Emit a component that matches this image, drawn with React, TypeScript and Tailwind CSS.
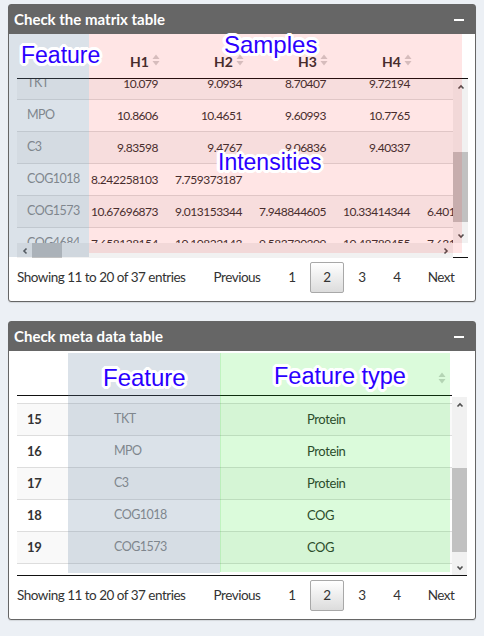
import React from "react";

const halo =
  "[text-shadow:0_0_3px_#fff,3px_0_0_#fff,-3px_0_0_#fff,0_3px_0_#fff,0_-3px_0_#fff,2px_2px_0_#fff,-2px_-2px_0_#fff,2px_-2px_0_#fff,-2px_2px_0_#fff,3px_1px_0_#fff,-3px_1px_0_#fff,3px_-1px_0_#fff,-3px_-1px_0_#fff,1px_3px_0_#fff,-1px_3px_0_#fff,1px_-3px_0_#fff,-1px_-3px_0_#fff]";

const matrixRows = [
  ["TKT", "10.079", "9.0934", "8.70407", "9.72194", ""],
  ["MPO", "10.8606", "10.4651", "9.60993", "10.7765", ""],
  ["C3", "9.83598", "9.4767", "9.06836", "9.40337", ""],
  ["COG1018", "8.242258103", "7.759373187", "", "", ""],
  ["COG1573", "10.67696873", "9.013153344", "7.948844605", "10.33414344", "6.401528874"],
  ["COG4684", "7.658128154", "10.10822143", "9.583720309", "10.48789455", "7.631894512"],
];

const metaRows = [
  ["14", "", ""],
  ["15", "TKT", "Protein"],
  ["16", "MPO", "Protein"],
  ["17", "C3", "Protein"],
  ["18", "COG1018", "COG"],
  ["19", "COG1573", "COG"],
  ["", "", ""],
];

function SortIcon() {
  return (
    <svg width="8" height="14" viewBox="0 0 8 14" className="mb-[2px] shrink-0">
      <path d="M0.5 6 L4 1.5 L7.5 6 Z" fill="#d2d2d2" />
      <path d="M0.5 8 L4 12.5 L7.5 8 Z" fill="#d2d2d2" />
    </svg>
  );
}

function Chevron({ dir }: { dir: "up" | "down" | "left" | "right" }) {
  const d = {
    up: "M1.5 5.5 L4 3 L6.5 5.5",
    down: "M1.5 2.5 L4 5 L6.5 2.5",
    left: "M5.5 1.5 L3 4 L5.5 6.5",
    right: "M2.5 1.5 L5 4 L2.5 6.5",
  }[dir];
  return (
    <svg width="8" height="8" viewBox="0 0 8 8">
      <path d={d} fill="none" stroke="#505050" strokeWidth="1.6" />
    </svg>
  );
}

function VScroll({ h, thumbTop, thumbH }: { h: string; thumbTop: string; thumbH: string }) {
  return (
    <div className={`flex w-[15px] flex-col items-center bg-[#f1f1f1] ${h}`}>
      <div className="flex h-[15px] items-center justify-center">
        <Chevron dir="up" />
      </div>
      <div className={`w-full bg-[#c1c1c1] ${thumbTop} ${thumbH}`} />
      <div className="flex-1" />
      <div className="flex h-[15px] items-center justify-center">
        <Chevron dir="down" />
      </div>
    </div>
  );
}

function Footer() {
  const btn = "flex h-[31px] items-center justify-center rounded-[2px]";
  return (
    <div className="flex items-center pt-[4px] text-[13.5px] tracking-[-0.5px] text-[#333]">
      <span className="whitespace-nowrap">Showing 11 to 20 of 37 entries</span>
      <div className="ml-auto flex gap-[1px]">
        <span className={`${btn} w-[74px]`}>Previous</span>
        <span className={`${btn} w-[34px]`}>1</span>
        <span className={`${btn} w-[34px] border border-[#a8a8a8] bg-gradient-to-b from-white to-[#dcdcdc]`}>2</span>
        <span className={`${btn} w-[34px]`}>3</span>
        <span className={`${btn} w-[34px]`}>4</span>
        <span className={`${btn} w-[52px]`}>Next</span>
      </div>
    </div>
  );
}

function Box({ title, children }: { title: string; children: React.ReactNode }) {
  return (
    <div className="rounded-[3px] border border-[#666] bg-white shadow-[0_1px_1px_rgba(0,0,0,0.1)]">
      <div className="flex h-[29px] items-center justify-between bg-[#666] pl-[5px] pr-[11px]">
        <h3 className="text-[15px] font-bold leading-none text-white">{title}</h3>
        <span className="h-[2px] w-[10px] bg-white" />
      </div>
      <div className="relative px-2 pb-2">{children}</div>
    </div>
  );
}

function Label({ text, pos }: { text: string; pos: string }) {
  return (
    <span
      className={`absolute whitespace-nowrap font-['Liberation_Sans',Arial,sans-serif] leading-none text-[#2b00ff] ${halo} ${pos}`}
    >
      {text}
    </span>
  );
}

function MatrixTable() {
  return (
    <>
      <div className="flex h-[45px] w-[451px] border-b border-[#111]">
        <div className="flex w-[436px] overflow-hidden">
          <div className="w-[67px] shrink-0" />
          {["H1", "H2", "H3", "H4", "H5"].map((h) => (
            <div key={h} className="flex w-[84px] shrink-0 items-end justify-end gap-[3px] pb-[9px] pr-[8px]">
              <span className="text-[14px] font-bold leading-[15px] text-[#333]">{h}</span>
              <SortIcon />
            </div>
          ))}
        </div>
      </div>
      <div className="flex">
        <div className="w-[436px]">
          <div className="h-[164px] overflow-hidden">
            <div className="-mt-[11px]">
              {matrixRows.map((r, i) => (
                <div
                  key={r[0]}
                  className={`flex h-[32px] w-max items-center border-b border-[#ddd] tracking-[-0.5px] ${i % 2 === 0 ? "bg-[#f6f6f6]" : "bg-white"}`}
                >
                  <div className="w-[67px] shrink-0 pl-[10px] text-[12.5px] text-[#888]">{r[0]}</div>
                  {r.slice(1).map((v, j) => (
                    <div key={j} className="w-[84px] shrink-0 pr-[10px] text-right text-[12px] text-[#333]">
                      {v}
                    </div>
                  ))}
                </div>
              ))}
            </div>
          </div>
          <div className="flex h-[15px] items-center bg-[#f1f1f1]">
            <div className="flex w-[15px] justify-center">
              <Chevron dir="left" />
            </div>
            <div className="h-full w-[30px] bg-[#c1c1c1]" />
            <div className="flex-1" />
            <div className="flex w-[15px] justify-center">
              <Chevron dir="right" />
            </div>
          </div>
        </div>
        <div>
          <VScroll h="h-[164px]" thumbTop="mt-[58px]" thumbH="h-[70px]" />
          <div className="h-[15px] border-b border-[#111]" />
        </div>
      </div>
    </>
  );
}

function MetaTable() {
  return (
    <>
      <div className="flex h-[45px] w-[435px] border-b border-[#111]">
        <div className="w-[87px] shrink-0" />
        <div className="w-[193px] shrink-0" />
        <div className="flex flex-1 items-end justify-end pb-[8px] pr-[6px]">
          <SortIcon />
        </div>
      </div>
      <div className="flex border-b border-[#111]">
        <div className="h-[179px] w-[436px] overflow-hidden">
          <div className="-mt-[24px]">
            {metaRows.map((r, i) => (
              <div
                key={i}
                className={`flex h-[32px] items-center border-b border-[#ddd] text-[13px] tracking-[-0.4px] ${i % 2 === 1 ? "bg-[#f9f9f9]" : "bg-white"}`}
              >
                <div className="w-[87px] shrink-0 pl-[10px] font-bold text-[#333]">{r[0]}</div>
                <div className="w-[193px] shrink-0 pl-[10px] text-[12.5px] tracking-[-0.5px] text-[#888]">{r[1]}</div>
                <div className="flex-1 pl-[10px] text-[#333]">{r[2]}</div>
              </div>
            ))}
          </div>
        </div>
        <div className="pt-[1px]">
          <VScroll h="h-[178px]" thumbTop="mt-[56px]" thumbH="h-[84px]" />
        </div>
      </div>
    </>
  );
}

export default function App() {
  return (
    <div className="min-h-[636px] bg-[#ecf0f5] px-2 pt-1 font-['Lato','Liberation_Sans',sans-serif]">
      <Box title="Check the matrix table">
        <MatrixTable />
        <Footer />
        <div className="pointer-events-none absolute left-0 top-0 h-[223px] w-[80px] bg-[rgba(100,130,160,0.23)]" />
        <div className="pointer-events-none absolute left-[80px] top-0 h-[219px] w-[373px] bg-[rgba(255,0,0,0.1)]" />
        <Label text="Feature" pos="left-[12px] top-[10px] text-[23px]" />
        <Label text="Samples" pos="left-[215px] top-[-1px] text-[24px]" />
        <Label text="Intensities" pos="left-[209px] top-[117px] text-[23px]" />
      </Box>
      <div className="h-[19px]" />
      <Box title="Check meta data table">
        <MetaTable />
        <Footer />
        <div className="pointer-events-none absolute left-[59px] top-[2px] h-[220px] w-[152px] bg-[rgba(100,130,160,0.23)]" />
        <div className="pointer-events-none absolute left-[211px] top-[2px] h-[219px] w-[230px] border-l border-[rgba(0,190,0,0.12)] bg-[rgba(0,230,0,0.14)]" />
        <Label text="Feature" pos="left-[94px] top-[15px] text-[24px]" />
        <Label text="Feature type" pos="left-[265px] top-[14px] text-[23.5px]" />
      </Box>
    </div>
  );
}
